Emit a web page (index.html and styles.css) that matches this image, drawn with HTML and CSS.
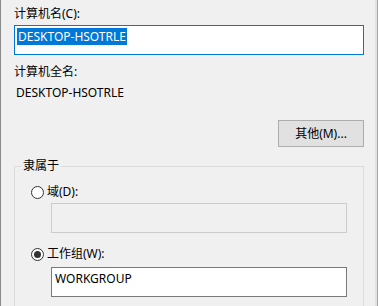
FILE: index.html
```html
<!DOCTYPE html>
<html lang="zh-CN">
<head>
<meta charset="utf-8">
<title>计算机名/域更改</title>
<link rel="stylesheet" href="styles.css">
</head>
<body>
<div class="dlg">
  <div class="lbl">计算机名(C):</div>
  <div class="edit focused"><span class="sel">DESKTOP-HSOTRLE</span></div>
  <div class="lbl lbl-full">计算机全名:</div>
  <div class="value">DESKTOP-HSOTRLE</div>
  <div class="btn-row"><button class="btn">其他(M)...</button></div>
  <fieldset class="group">
    <legend class="legend">隶属于</legend>
    <div class="radio-row first"><span class="radio"></span><span class="radio-text">域(D):</span></div>
    <div class="edit disabled inset"></div>
    <div class="radio-row second"><span class="radio checked"></span><span class="radio-text">工作组(W):</span></div>
    <div class="edit normal inset wg"><span class="txt">WORKGROUP</span></div>
  </fieldset>
</div>
</body>
</html>
```

FILE: styles.css
```css
html, body {
  margin: 0;
  padding: 0;
  background: #f0f0f0;
}

body {
  font-family: "Noto Sans", "Noto Sans CJK SC", sans-serif;
  font-size: 12px;
  color: #000;
}

.dlg {
  box-sizing: border-box;
  width: 378px;
  height: 306px;
  overflow: hidden;
  border-left: 1px solid #8a8a8a;
  border-right: 1px solid #a6a6a6;
  box-shadow: inset -2px 0 0 #e2e2e2;
  padding: 6px 13px 0 13px;
}

.lbl {
  line-height: 16px;
  height: 16px;
}

.lbl-full {
  margin-top: 9px;
}

.value {
  margin-top: 5px;
  line-height: 16px;
  height: 16px;
  padding-left: 2px;
}

.edit {
  box-sizing: border-box;
  height: 30px;
  border: 1px solid #7a7a7a;
  background: #fff;
  padding: 2px 0 0 2px;
  margin-top: 3px;
}

.edit.focused {
  border-color: #0078d7;
}

.sel {
  display: inline-block;
  line-height: 17px;
  height: 17px;
  background: #0078d7;
  color: #fff;
  padding: 0 1px;
}

.btn-row {
  display: flex;
  justify-content: flex-end;
  margin-top: 19px;
}

.btn {
  box-sizing: border-box;
  width: 86px;
  height: 27px;
  margin: 0;
  padding: 0;
  border: 1px solid #adadad;
  background: #e1e1e1;
  font: inherit;
  color: #000;
  line-height: 25px;
}

.group {
  margin: 11px 0 0 0;
  padding: 0 16px 20px 16px;
  border: 1px solid #dcdcdc;
  min-width: 0;
}

.legend {
  padding: 0 2px;
  margin-left: -10px;
  line-height: 16px;
  height: 16px;
}

.radio-row {
  display: flex;
  align-items: center;
  height: 16px;
  line-height: 16px;
}

.radio-row.first {
  margin-top: 10px;
}

.radio-row.second {
  margin-top: 13px;
}

.radio {
  box-sizing: border-box;
  width: 13px;
  height: 13px;
  border: 1px solid #333;
  border-radius: 50%;
  background: #fff;
  display: flex;
  align-items: center;
  justify-content: center;
  flex: none;
}

.radio.checked::after {
  content: "";
  width: 7px;
  height: 7px;
  border-radius: 50%;
  background: #333;
}

.radio-text {
  margin-left: 3px;
}

.inset {
  margin-left: 20px;
}

.edit.disabled {
  background: #f0f0f0;
  border-color: #cccccc;
}

.edit.wg {
  margin-top: 5px;
  padding-left: 3px;
}

.txt {
  display: inline-block;
  line-height: 17px;
}
```
